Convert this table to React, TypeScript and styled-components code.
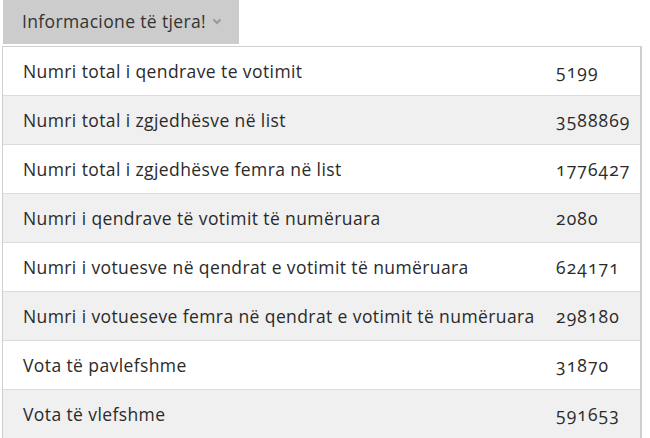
import React from "react";
import styled, { createGlobalStyle } from "styled-components";

const Global = createGlobalStyle`
  html, body { margin: 0; padding: 0; background: #fff; }
  body { font-family: "Open Sans", Lato, sans-serif; color: #333; }
`;

const Page = styled.div`
  position: relative;
  width: 650px;
  height: 438px;
  overflow: hidden;
`;

const Toggle = styled.button`
  display: flex;
  align-items: center;
  gap: 6px;
  margin-left: 3px;
  width: 236px;
  height: 44px;
  padding: 0 0 2px 19px;
  border: none;
  background: #cccccc;
  font-family: inherit;
  font-size: 17.5px;
  letter-spacing: 0.36px;
  color: #333;
  cursor: pointer;
`;

const Menu = styled.ul`
  position: absolute;
  top: 46px;
  left: 2px;
  width: 640px;
  margin: 0;
  padding: 0;
  list-style: none;
  background: #fff;
  border: 1px solid #cfcfcf;
  border-right-width: 2px;
  box-sizing: border-box;
`;

const Row = styled.li<{ $alt: boolean }>`
  display: grid;
  grid-template-columns: 1fr 84px;
  align-items: center;
  height: 48px;
  padding-left: 20px;
  background: ${(p) => (p.$alt ? "#f0f0f0" : "#fff")};
  border-bottom: 1px solid #dcdcdc;
  font-size: 17.5px;
  letter-spacing: 0.4px;
  color: #2a2a2a;
`;

const Value = styled.span`
  font-variant-numeric: oldstyle-nums;
  letter-spacing: 1.1px;
`;

const rows: [string, string][] = [
  ["Numri total i qendrave te votimit", "5199"],
  ["Numri total i zgjedhësve në list", "3588869"],
  ["Numri total i zgjedhësve femra në list", "1776427"],
  ["Numri i qendrave të votimit të numëruara", "2080"],
  ["Numri i votuesve në qendrat e votimit të numëruara", "624171"],
  ["Numri i votueseve femra në qendrat e votimit të numëruara", "298180"],
  ["Vota të pavlefshme", "31870"],
  ["Vota të vlefshme", "591653"],
];

const Chevron = () => (
  <svg width="10" height="7" viewBox="0 0 10 7">
    <path d="M1.5 1.5 L5 5 L8.5 1.5" fill="none" stroke="#999" strokeWidth="2" />
  </svg>
);

export default function App() {
  return (
    <Page>
      <Global />
      <Toggle>
        Informacione të tjera!
        <Chevron />
      </Toggle>
      <Menu>
        {rows.map(([label, value], i) => (
          <Row key={label} $alt={i % 2 === 1}>
            <span>{label}</span>
            <Value>{value}</Value>
          </Row>
        ))}
      </Menu>
    </Page>
  );
}
